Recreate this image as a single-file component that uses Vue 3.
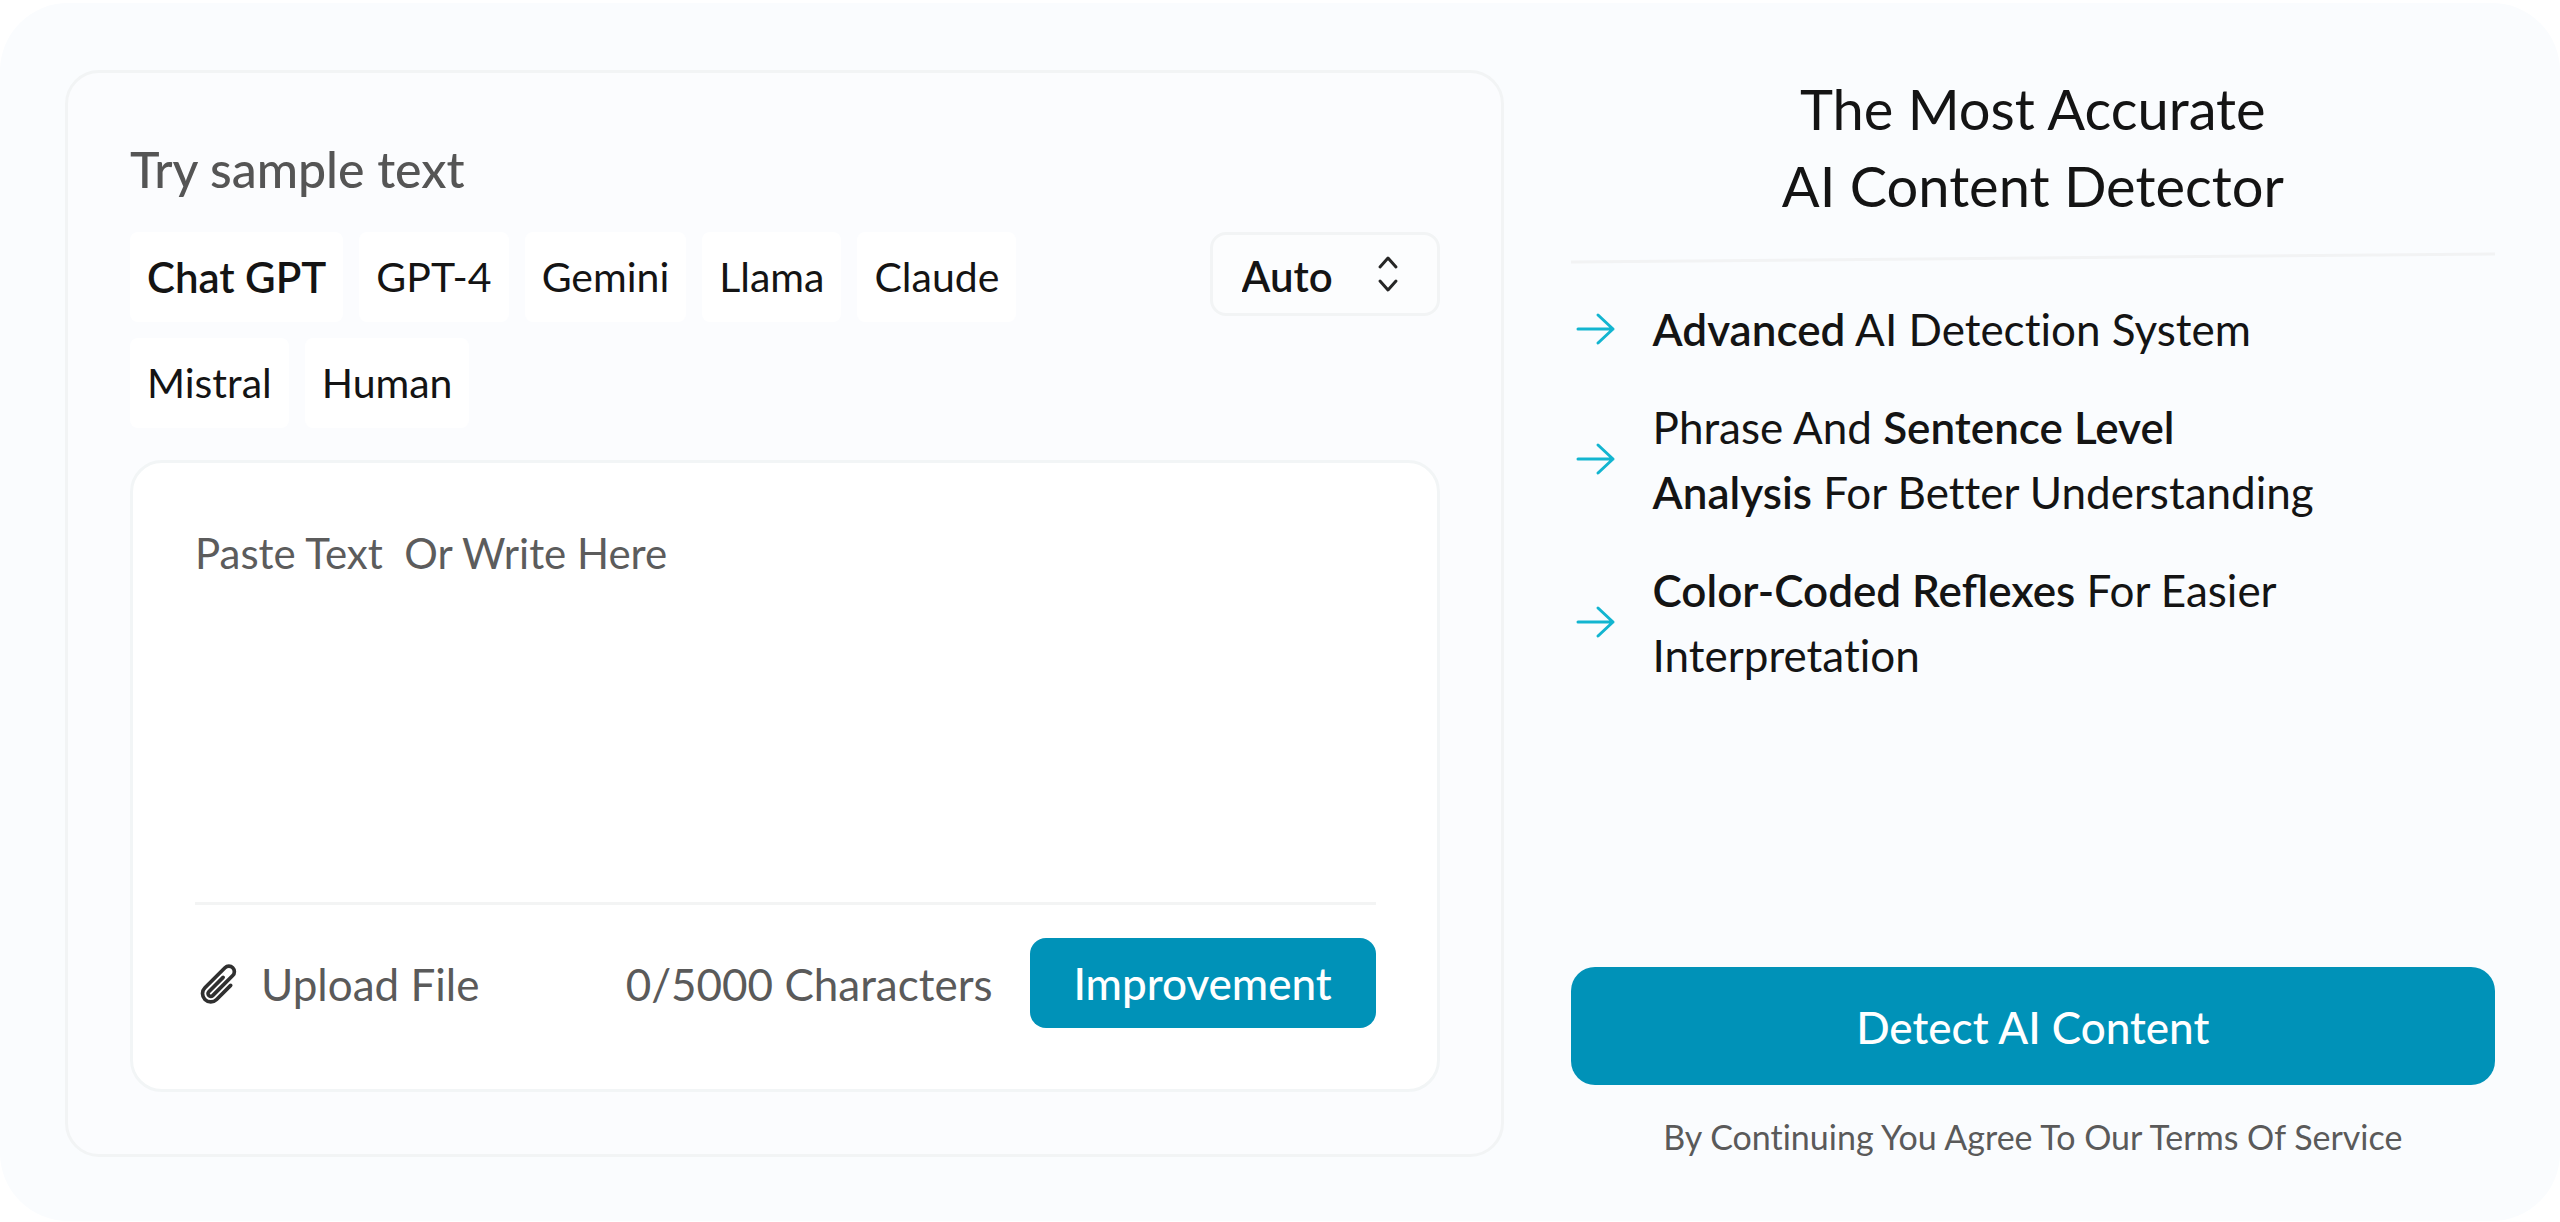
<script setup>
import { computed, ref } from 'vue'

const samples = ['Chat GPT', 'GPT-4', 'Gemini', 'Llama', 'Claude', 'Mistral', 'Human']
const selected = ref('Chat GPT')
const mode = ref('Auto')
const text = ref('')
const limit = 5000
const count = computed(() => text.value.length)

const features = [
  [[{ t: 'Advanced', b: true }, { t: ' AI Detection System' }]],
  [
    [{ t: 'Phrase And ' }, { t: 'Sentence Level', b: true }],
    [{ t: 'Analysis', b: true }, { t: ' For Better Understanding' }],
  ],
  [
    [{ t: 'Color-Coded Reflexes', b: true }, { t: ' For Easier' }],
    [{ t: 'Interpretation' }],
  ],
]
</script>

<template>
  <main class="panel">
    <section class="card">
      <h2 class="card-title">Try sample text</h2>
      <div class="toolbar">
        <div class="chips">
          <button
            v-for="s in samples"
            :key="s"
            type="button"
            class="chip"
            :class="{ active: s === selected }"
            @click="selected = s"
          >{{ s }}</button>
        </div>
        <div class="mode">
          <select v-model="mode" class="mode-select" aria-label="Detection mode">
            <option>Auto</option>
          </select>
          <svg class="mode-icon" viewBox="0 0 24 40" aria-hidden="true">
            <path d="M4 13 12 4l8 9M4 27l8 9 8-9" />
          </svg>
        </div>
      </div>
      <div class="editor">
        <textarea
          v-model="text"
          class="editor-input"
          :maxlength="limit"
          placeholder="Paste Text  Or Write Here"
          aria-label="Text to analyse"
        ></textarea>
        <div class="editor-footer">
          <button type="button" class="upload">
            <svg class="clip" viewBox="0 0 24 24" aria-hidden="true">
              <path d="m18.375 12.739-7.693 7.693a4.5 4.5 0 0 1-6.364-6.364l10.94-10.94A3 3 0 1 1 19.5 7.372L8.552 18.32m.009-.01-.01.01m5.699-9.941-7.81 7.81a1.5 1.5 0 0 0 2.112 2.13" />
            </svg>
            Upload File
          </button>
          <span class="counter">{{ count }}/{{ limit }} Characters</span>
          <button type="button" class="improve">Improvement</button>
        </div>
      </div>
    </section>

    <aside class="info">
      <h1 class="headline">The Most Accurate<br />AI Content Detector</h1>
      <svg class="rule" viewBox="0 0 924 12" preserveAspectRatio="none" aria-hidden="true">
        <path d="M0 10 924 2" />
      </svg>
      <ul class="features">
        <li v-for="(lines, i) in features" :key="i" class="feature">
          <svg class="arrow" viewBox="0 0 48 48" aria-hidden="true">
            <path d="M7 24h35M27 10l15 14-15 14" />
          </svg>
          <p class="feature-text">
            <span v-for="(line, j) in lines" :key="j" class="line"><template
              v-for="(part, k) in line" :key="k"
            ><strong v-if="part.b">{{ part.t }}</strong><template v-else>{{ part.t }}</template></template></span>
          </p>
        </li>
      </ul>
      <button type="button" class="detect">Detect AI Content</button>
      <p class="terms">By Continuing You Agree To Our <a href="#terms">Terms Of Service</a></p>
    </aside>
  </main>
</template>

<style>
body {
  margin: 0;
  background: #fff;
}
</style>

<style scoped>
.panel {
  box-sizing: border-box;
  display: grid;
  grid-template-columns: 1438fr 924fr;
  gap: 67px;
  margin-top: 3px;
  padding: 67px 65px 64px;
  border-radius: 68px;
  background: #fafcfe;
  color: #141414;
  font-family: Lato, "Liberation Sans", sans-serif;
  font-size: 44px;
  font-variant-ligatures: none;
}
button,
select,
textarea {
  margin: 0;
  border: 0;
  padding: 0;
  background: none;
  color: inherit;
  font: inherit;
  font-variant-ligatures: inherit;
}
button {
  cursor: pointer;
}
h1,
h2,
p,
ul {
  margin: 0;
  padding: 0;
}
.card {
  display: flex;
  flex-direction: column;
  padding: 64px 61px 62px 62px;
  border: 3px solid #f2f4f5;
  border-radius: 34px;
  background: #fbfcfe;
}
.card-title {
  color: #555;
  font-size: 50px;
  font-weight: 500;
  line-height: 64px;
}
.toolbar {
  display: flex;
  align-items: flex-start;
  gap: 32px;
  margin-top: 31px;
}
.chips {
  display: flex;
  flex: 1;
  flex-wrap: wrap;
  gap: 16px;
}
.chip {
  padding: 16px 17px;
  border-radius: 8px;
  background: #fff;
  font-size: 41px;
  line-height: 58px;
}
.chip.active {
  font-size: 42px;
  font-weight: 600;
}
.mode {
  position: relative;
  width: 230px;
}
.mode-select {
  box-sizing: border-box;
  width: 100%;
  height: 84px;
  padding: 4px 80px 0 29px;
  border: 3px solid #f2f4f5;
  border-radius: 16px;
  background: #fcfdfe;
  font-size: 42px;
  font-weight: 600;
  appearance: none;
}
.mode-icon {
  position: absolute;
  top: 22px;
  right: 40px;
  width: 24px;
  height: 40px;
  fill: none;
  stroke: #262626;
  stroke-width: 3;
  stroke-linecap: round;
  stroke-linejoin: round;
  pointer-events: none;
}
.editor {
  display: flex;
  flex-direction: column;
  margin-top: 32px;
  padding: 58px 61px 61px 62px;
  border: 3px solid #f2f5f6;
  border-radius: 32px;
  background: #fff;
}
.editor-input {
  height: 381px;
  border-bottom: 3px solid #f3f4f4;
  outline: 0;
  font-size: 42px;
  line-height: 64px;
  resize: none;
}
.editor-input::placeholder {
  color: #5c5c5c;
  opacity: 1;
}
.editor-footer {
  display: flex;
  align-items: center;
  margin-top: 33px;
  color: #5a5a5a;
}
.upload {
  display: flex;
  align-items: center;
  gap: 20px;
  padding: 2px 0 0 2px;
}
.clip {
  width: 44px;
  height: 44px;
  fill: none;
  stroke: #303030;
  stroke-width: 2;
  stroke-linecap: round;
  stroke-linejoin: round;
}
.counter {
  margin-left: auto;
  padding-top: 2px;
}
.improve {
  width: 346px;
  height: 90px;
  margin-left: 37px;
  border-radius: 16px;
  background: #0092b8;
  color: #fff;
  font-weight: 500;
}
.info {
  display: flex;
  flex-direction: column;
}
.headline {
  font-size: 56px;
  font-weight: 400;
  line-height: 77px;
  text-align: center;
}
.rule {
  width: 100%;
  height: 12px;
  margin-top: 28px;
  fill: none;
  stroke: #f2f3f4;
  stroke-width: 3;
}
.features {
  display: flex;
  flex-direction: column;
  gap: 31px;
  margin-top: 31px;
  list-style: none;
}
.feature {
  display: flex;
  align-items: center;
  gap: 34px;
}
.arrow {
  width: 48px;
  height: 48px;
  fill: none;
  stroke: #12b5d0;
  stroke-width: 3;
  stroke-linecap: round;
  stroke-linejoin: round;
}
.feature-text {
  padding-top: 2px;
  line-height: 65px;
}
.line {
  display: block;
}
strong {
  font-weight: 600;
  font-variant-ligatures: normal;
}
.detect {
  height: 118px;
  padding-top: 2px;
  margin-top: auto;
  border-radius: 24px;
  background: #0092b8;
  color: #fff;
  font-weight: 500;
}
.terms {
  margin-top: 32px;
  color: #5a5a5a;
  font-size: 34px;
  line-height: 40px;
  text-align: center;
}
.terms a {
  color: inherit;
  text-decoration: none;
}
</style>
